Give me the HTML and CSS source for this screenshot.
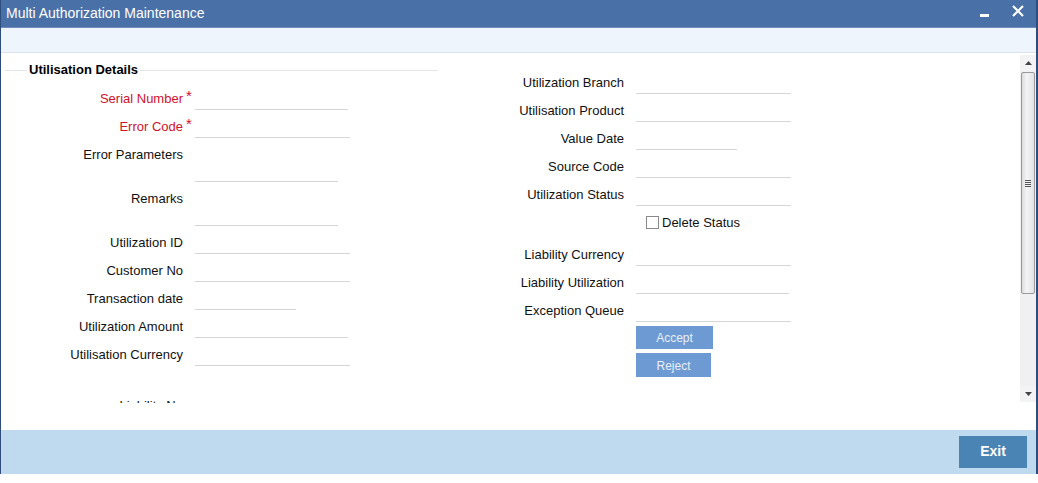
FILE: index.html
```html
<!DOCTYPE html>
<html>
<head>
<meta charset="utf-8">
<link rel="stylesheet" href="styles.css">
</head>
<body>
<div class="window">
  <div class="frame">
    <div class="titlebar">
      <span class="title">Multi Authorization Maintenance</span>
      <div class="winbtns">
        <svg class="min" width="10" height="4" viewBox="0 0 10 4"><rect x="0" y="0" width="9" height="3" fill="#fff"/></svg>
        <svg class="close" width="12" height="12" viewBox="0 0 12 12"><path d="M1 1 L11 11 M11 1 L1 11" stroke="#fff" stroke-width="2.2"/></svg>
      </div>
    </div>
    <div class="toolbar"></div>
    <div class="body">
      <div class="scroll-area">
        <div class="left">
          <div class="fieldset">
            <div class="legend">Utilisation Details</div>
            <div class="rows">
              <div class="row"><div class="label req">Serial Number<span class="star">*</span></div><div class="field w153"></div></div>
              <div class="row"><div class="label req">Error Code<span class="star">*</span></div><div class="field w155"></div></div>
              <div class="row tall"><div class="label">Error Parameters</div><div class="field area w143"></div></div>
              <div class="row tall"><div class="label">Remarks</div><div class="field area w143"></div></div>
              <div class="row"><div class="label">Utilization ID</div><div class="field w155"></div></div>
              <div class="row"><div class="label">Customer No</div><div class="field w155"></div></div>
              <div class="row"><div class="label">Transaction date</div><div class="field w101"></div></div>
              <div class="row"><div class="label">Utilization Amount</div><div class="field w153"></div></div>
              <div class="row"><div class="label">Utilisation Currency</div><div class="field w155"></div></div>
              <div class="row later"><div class="label">Liability No</div><div class="field w155"></div></div>
            </div>
          </div>
        </div>
        <div class="right">
          <div class="row"><div class="label">Utilization Branch</div><div class="field w155"></div></div>
          <div class="row"><div class="label">Utilisation Product</div><div class="field w155"></div></div>
          <div class="row"><div class="label">Value Date</div><div class="field w101"></div></div>
          <div class="row"><div class="label">Source Code</div><div class="field w155"></div></div>
          <div class="row"><div class="label">Utilization Status</div><div class="field w155"></div></div>
          <div class="row check-row"><div class="label"></div><label class="check"><span class="box"></span>Delete Status</label></div>
          <div class="row"><div class="label">Liability Currency</div><div class="field w155"></div></div>
          <div class="row"><div class="label">Liability Utilization</div><div class="field w153"></div></div>
          <div class="row"><div class="label">Exception Queue</div><div class="field w155"></div></div>
          <div class="actions">
            <div class="btn accept">Accept</div>
            <div class="btn reject">Reject</div>
          </div>
        </div>
      </div>
      <div class="scrollbar">
        <div class="arrow up"><svg width="7" height="4" viewBox="0 0 7 4"><path d="M0 4 L3.5 0 L7 4 Z" fill="#444"/></svg></div>
        <div class="thumb"><div class="grip"></div></div>
        <div class="track"></div>
        <div class="arrow down"><svg width="7" height="4" viewBox="0 0 7 4"><path d="M0 0 L3.5 4 L7 0 Z" fill="#444"/></svg></div>
      </div>
    </div>
    <div class="gap"></div>
    <div class="footer">
      <div class="exit">Exit</div>
    </div>
  </div>
</div>
</body>
</html>
```
FILE: styles.css
```css
html, body {
  margin: 0;
  padding: 0;
  background: #fff;
}
body {
  font-family: "Liberation Sans", Arial, sans-serif;
  font-size: 13px;
  color: #000;
}
.window {
  width: 1038px;
  height: 483px;
  background: #fff;
  overflow: hidden;
}
.frame {
  height: 474px;
  border-left: 1px solid #2f4d7c;
  border-right: 2px solid #2f4d7c;
  display: flex;
  flex-direction: column;
}
.titlebar {
  height: 28px;
  flex: none;
  background: #4a70a8;
  display: flex;
  align-items: center;
  justify-content: space-between;
  box-sizing: border-box;
  border-bottom: 1px solid #6f8db8;
}
.title {
  color: #fff;
  font-size: 14px;
  margin-left: 5px;
  margin-top: -2px;
}
.winbtns {
  display: flex;
  align-items: center;
  margin-right: 12px;
  margin-top: -6px;
}
.winbtns .min {
  margin-right: 22px;
  margin-top: 10px;
}
.toolbar {
  height: 24px;
  flex: none;
  background: #eef5fd;
  border-bottom: 1px solid #dae3ee;
}
.body {
  height: 350px;
  flex: none;
  display: flex;
}
.scroll-area {
  flex: 1;
  overflow: hidden;
  display: flex;
}
.left {
  width: 439px;
  flex: none;
}
.fieldset {
  margin: 17px 0 0 4px;
  width: 433px;
  border-top: 1px solid #e4e4e4;
}
.legend {
  width: fit-content;
  margin: -10px 0 0 22px;
  padding: 0 2px;
  background: #fff;
  font-weight: bold;
  font-size: 13px;
  line-height: 18px;
}
.rows {
  margin-top: 10px;
}
.row {
  display: grid;
  grid-template-columns: 178px auto;
  column-gap: 12px;
  height: 28px;
  align-items: start;
}
.right .row {
  grid-template-columns: 184px auto;
}
.row.tall {
  height: 44px;
}
.row.later {
  margin-top: 23px;
}
.label {
  text-align: right;
  line-height: 18px;
  padding-top: 1px;
  white-space: nowrap;
  color: #111;
}
.label.req {
  color: #d0112b;
}
.star {
  display: inline-block;
  width: 0;
  margin-left: 3px;
  margin-right: -3px;
  font-size: 15px;
  line-height: 12px;
  vertical-align: top;
}
.field {
  height: 20px;
  border-bottom: 1px solid #d6d6d6;
}
.field.area {
  height: 36px;
}
.w155 { width: 155px; }
.w153 { width: 153px; }
.w143 { width: 143px; }
.w101 { width: 101px; }
.right {
  flex: none;
  width: 400px;
  padding-top: 20px;
}
.row.check-row {
  height: 32px;
}
.check {
  display: flex;
  align-items: center;
  line-height: 18px;
  margin-left: 10px;
  margin-top: 1px;
  color: #111;
}
.box {
  width: 11px;
  height: 11px;
  border: 1px solid #8a8a8a;
  background: #fff;
  margin-right: 3px;
  margin-top: -1px;
}
.actions {
  margin-top: -3px;
  margin-left: 196px;
  display: flex;
  flex-direction: column;
  gap: 4px;
}
.btn {
  background: #6e9ad3;
  color: #e9eef7;
  text-align: center;
  font-size: 12px;
  line-height: 25px;
  height: 23px;
}
.btn.accept { width: 77px; }
.btn.reject { width: 75px; height: 24px; line-height: 26px; }
.scrollbar {
  width: 16px;
  flex: none;
  margin-top: 2px;
  height: 347px;
  display: flex;
  flex-direction: column;
  background: #f0f0f0;
}
.arrow {
  height: 16px;
  flex: none;
  display: flex;
  align-items: center;
  justify-content: center;
  background: #f3f3f3;
}
.thumb {
  height: 222px;
  flex: none;
  margin: 1px 1px 0 1px;
  box-sizing: border-box;
  border: 1px solid #9a9a9a;
  border-radius: 2px;
  background: linear-gradient(to right, #dcdcdc, #f4f4f4 40%, #e2e2e2);
  display: flex;
  align-items: center;
  justify-content: center;
}
.grip {
  width: 6px;
  height: 7px;
  background: repeating-linear-gradient(to bottom, #555 0, #555 1px, transparent 1px, transparent 2px);
}
.track {
  flex: 1;
}
.gap {
  height: 27px;
  flex: none;
  background: #fff;
}
.footer {
  height: 44px;
  flex: none;
  background: #bfdaee;
  display: flex;
  justify-content: flex-end;
  align-items: flex-start;
}
.exit {
  margin-top: 6px;
  margin-right: 9px;
  width: 68px;
  height: 32px;
  background: #4a84b4;
  color: #fff;
  font-size: 14px;
  font-weight: bold;
  line-height: 31px;
  text-align: center;
}
```
